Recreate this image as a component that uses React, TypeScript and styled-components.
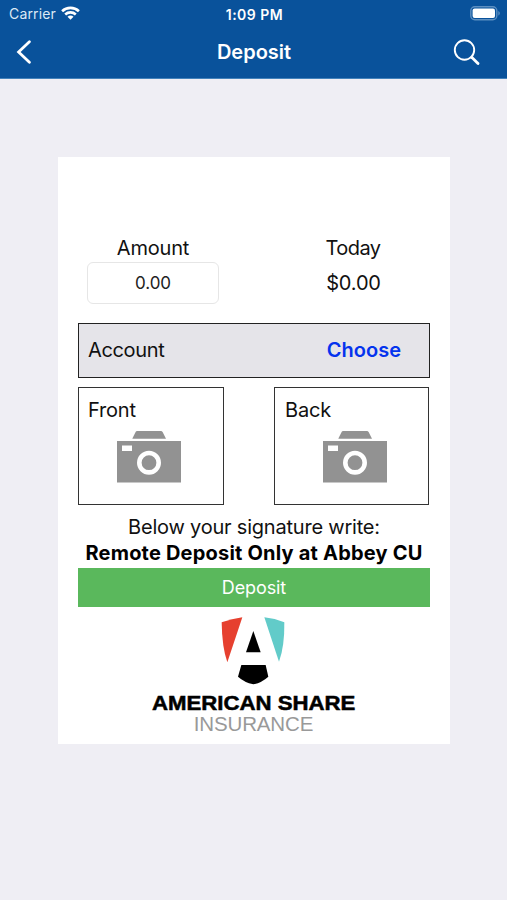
import React from "react";
import styled, { createGlobalStyle } from "styled-components";

const GlobalStyle = createGlobalStyle`
  * { box-sizing: border-box; }
  body { margin: 0; background: #efeef4; }
  button, input { font: inherit; letter-spacing: inherit; margin: 0; padding: 0; }
`;

const Screen = styled.div`
  width: 507px;
  height: 900px;
  background: #efeef4;
  color: #111;
  font-family: Inter, "Liberation Sans", sans-serif;
  font-size: 20px;
`;

const Header = styled.header`
  height: 79px;
  background: #09529b;
  color: #fff;
  border-bottom: 1px solid #4382bb;
`;

const StatusBar = styled.div`
  display: grid;
  grid-template-columns: 1fr auto 1fr;
  align-items: center;
  height: 26px;
  padding: 0 7px 0 9px;
  font-size: 14px;
`;

const Carrier = styled.div`
  display: flex;
  align-items: center;
  gap: 5px;
  letter-spacing: 0.15px;
  color: #dce9f5;
`;

const Clock = styled.div`
  padding-top: 2px;
  font-size: 14px;
  font-weight: 600;
  letter-spacing: 0.5px;
`;

const Battery = styled.div`
  display: flex;
  justify-content: flex-end;
`;

const NavBar = styled.div`
  display: grid;
  grid-template-columns: 1fr auto 1fr;
  align-items: center;
  height: 52px;
  padding: 0 26px 0 16px;
`;

const NavButton = styled.button<{ $end?: boolean }>`
  display: flex;
  justify-self: ${(p) => (p.$end ? "end" : "start")};
  border: 0;
  background: none;
  color: #fff;
`;

const Title = styled.h1`
  margin: 0 0 0 11px;
  font-size: 20px;
  font-weight: 600;
  line-height: 24px;
`;

const Card = styled.main`
  width: 392px;
  height: 587px;
  margin: 78px 0 0 58px;
  padding: 78px 20px 0;
  background: #fff;
`;

const Totals = styled.section`
  display: grid;
  grid-template-columns: 132px 132px;
  column-gap: 68px;
  height: 88px;
  padding-left: 9px;
`;

const Total = styled.div`
  text-align: center;
`;

const Label = styled.div<{ $spacing: number }>`
  height: 27px;
  line-height: 26px;
  letter-spacing: ${(p) => p.$spacing}px;
`;

const AmountInput = styled.input`
  display: block;
  width: 132px;
  height: 42px;
  border: 1px solid #e6e6e6;
  border-radius: 6px;
  background: #fff;
  color: #222;
  font-size: 17px;
  letter-spacing: -0.1px;
  text-align: center;
  outline: 0;
`;

const TodayValue = styled.div`
  padding-left: 1px;
  line-height: 42px;
  letter-spacing: -0.15px;
`;

const AccountRow = styled.section`
  display: flex;
  align-items: center;
  justify-content: space-between;
  height: 55px;
  padding: 0 28px 2px 9px;
  border: 1px solid #222;
  background: #e5e4e9;
  letter-spacing: -0.35px;
`;

const Choose = styled.button`
  border: 0;
  background: none;
  color: #0433ee;
  font-weight: 600;
  letter-spacing: 0;
`;

const Photos = styled.section`
  display: flex;
  justify-content: space-between;
  height: 118px;
  margin-top: 9px;
  padding-right: 1px;
`;

const Photo = styled.button<{ $width: number; $inset: number; $indent: number }>`
  display: flex;
  flex-direction: column;
  align-items: flex-start;
  width: ${(p) => p.$width}px;
  padding: 10px 0 10px ${(p) => p.$inset}px;
  border: 1px solid #333;
  background: #fff;
  color: #111;
  line-height: 25px;
  letter-spacing: -0.2px;

  svg {
    margin: 8px 0 0 ${(p) => p.$indent}px;
  }
`;

const Notice = styled.p`
  margin: 9px -10px 0;
  text-align: center;
  line-height: 26px;
  letter-spacing: -0.21px;
  white-space: nowrap;

  strong {
    display: block;
    line-height: 26px;
    font-weight: 700;
    letter-spacing: 0.2px;
    color: #000;
  }
`;

const Submit = styled.button`
  display: block;
  width: 352px;
  height: 39px;
  margin-top: 2px;
  border: 0;
  background: #5ab85c;
  color: #fff;
  font-size: 18px;
  letter-spacing: -0.1px;
`;

const Insurer = styled.footer`
  display: flex;
  flex-direction: column;
  align-items: center;
  margin-top: 5px;
  white-space: nowrap;
`;

const InsurerName = styled.div`
  height: 20px;
  margin-top: 6px;
  color: #000;
  font-family: "Liberation Sans", sans-serif;
  font-size: 20px;
  font-weight: 700;
  line-height: 20px;
  -webkit-text-stroke: 0.5px #000;
  transform: scaleX(1.11);
`;

const InsurerKind = styled.div`
  height: 22px;
  margin-right: 1px;
  color: #999;
  font-family: "Liberation Sans", sans-serif;
  font-size: 20.5px;
  line-height: 22px;
  letter-spacing: -0.15px;
`;

const Wifi = () => (
  <svg width="19" height="14" viewBox="0 0 19 14" fill="none" stroke="#fff" strokeWidth="2.6">
    <path d="M1.1 5.2C5.7.7 13.3.7 17.9 5.2" />
    <path d="M4.2 8.5c3-2.8 7.6-2.8 10.6 0" />
    <path d="M9.5 13.7 6.5 10.7c1.7-1.500 4.300-1.500 6 0z" fill="#fff" stroke="none" />
  </svg>
);

const BatteryIcon = () => (
  <svg width="30" height="15" viewBox="0 0 30 15">
    <rect x=".8" y=".8" width="26" height="13" rx="4" fill="none" stroke="#5d8fc1" strokeWidth="1.4" />
    <rect x="2.6" y="2.6" width="22.4" height="9.400" rx="2" fill="#fff" />
    <path d="M28.300 5c2 .8 2 3.800 0 4.600z" fill="#5d8fc1" />
  </svg>
);

const BackIcon = () => (
  <svg width="16" height="24" viewBox="0 0 16 24" fill="none" stroke="currentColor" strokeWidth="2.8" strokeLinecap="round">
    <path d="M13.400 1.700 2.600 12l10.800 10.300" />
  </svg>
);

const SearchIcon = () => (
  <svg width="28" height="28" viewBox="0 0 28 28" fill="none" stroke="currentColor" strokeLinecap="round">
    <circle cx="11.500" cy="12" r="9.700" strokeWidth="1.900" />
    <path d="m18.700 19.200 6.300 6.200" strokeWidth="2.800" />
  </svg>
);

const Camera = () => (
  <svg width="64" height="52" viewBox="0 0 64 52">
    <path d="M20 0H44Q45 0 45.600 1L49 7.700H15.300L18.600 1Q19.200 0 20 0Z" fill="#929292" />
    <path d="M0 10H64V51.500H0Z" fill="#929292" />
    <path d="M5 14.500H15V20H5Z" fill="#fff" />
    <circle cx="32" cy="31.700" r="9.700" fill="#929292" stroke="#fff" strokeWidth="4.600" />
  </svg>
);

const Shield = () => (
  <svg width="90" height="75" viewBox="-3 0 270 225">
    <path d="M35 31Q66 20 97 16L52 151Q36 106 35 31z" fill="#e6402f" />
    <path d="M163 16Q195 19 223 31Q224 104 207 149z" fill="#62cbc9" />
    <path d="m130 57 22 64h-44z" fill="#000" />
    <path d="M94 159h73l8 35q-20 18-45 23-27-6-46-23z" fill="#000" />
  </svg>
);

export default function App() {
  return (
    <Screen>
      <GlobalStyle />
      <Header>
        <StatusBar>
          <Carrier>Carrier <Wifi /></Carrier>
          <Clock>1:09 PM</Clock>
          <Battery><BatteryIcon /></Battery>
        </StatusBar>
        <NavBar>
          <NavButton aria-label="Back"><BackIcon /></NavButton>
          <Title>Deposit</Title>
          <NavButton $end aria-label="Search"><SearchIcon /></NavButton>
        </NavBar>
      </Header>
      <Card>
        <Totals>
          <Total>
            <Label $spacing={-0.2}>Amount</Label>
            <AmountInput aria-label="Amount" defaultValue="0.00" />
          </Total>
          <Total>
            <Label $spacing={-0.6}>Today</Label>
            <TodayValue>$0.00</TodayValue>
          </Total>
        </Totals>
        <AccountRow>
          <span>Account</span>
          <Choose>Choose</Choose>
        </AccountRow>
        <Photos>
          <Photo $width={146} $inset={9} $indent={29}>Front<Camera /></Photo>
          <Photo $width={155} $inset={10} $indent={38}>Back<Camera /></Photo>
        </Photos>
        <Notice>
          Below your signature write:
          <strong>Remote Deposit Only at Abbey CU</strong>
        </Notice>
        <Submit>Deposit</Submit>
        <Insurer>
          <Shield />
          <InsurerName>AMERICAN SHARE</InsurerName>
          <InsurerKind>INSURANCE</InsurerKind>
        </Insurer>
      </Card>
    </Screen>
  );
}
